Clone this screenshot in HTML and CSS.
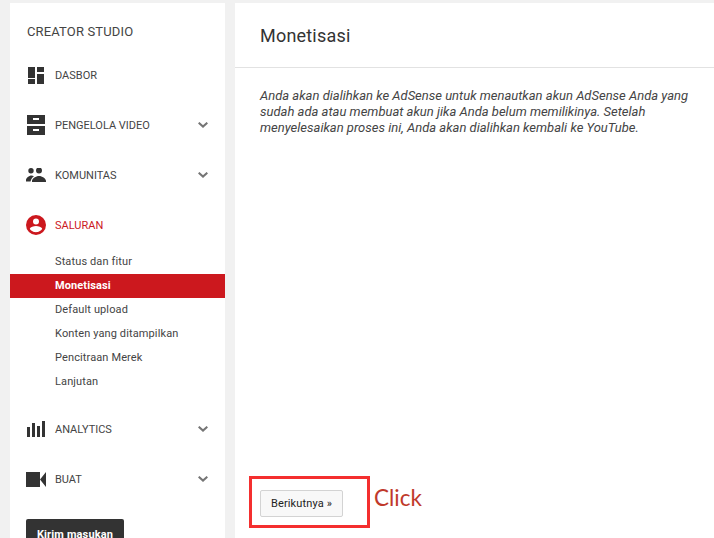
FILE: index.html
```html
<!DOCTYPE html>
<html lang="en">
<head>
  <meta charset="UTF-8">
  <meta name="viewport" content="width=device-width, initial-scale=1.0">
  <title>Monetisasi</title>
  <link rel="stylesheet" href="styles.css">
</head>
<body>
  <div class="page">
    <nav class="sidebar">
      <div class="studio-title">CREATOR STUDIO</div>

      <a class="nav-item">
        <span class="nav-icon">
          <svg width="16" height="17" viewBox="0 0 16 17"><path fill="#333" d="M0 0h7v11H0zM0 12h7v5H0zM9 0h7v5H9zM9 7h7v10H9z"/></svg>
        </span>
        <span class="nav-label">Dasbor</span>
      </a>

      <a class="nav-item">
        <span class="nav-icon">
          <svg width="18" height="20" viewBox="0 0 18 20"><path fill="#333" fill-rule="evenodd" d="M0 0h18v9H0zM6 3v2h6V3zM0 11h18v9H0zM6 14v2h6v-2z"/></svg>
        </span>
        <span class="nav-label">Pengelola video</span>
        <svg class="chevron" width="10" height="6" viewBox="0 0 10 6"><path fill="none" stroke="#757575" stroke-width="2" d="M.7.7 5 4.600 9.300.7"/></svg>
      </a>

      <a class="nav-item">
        <span class="nav-icon">
          <svg width="20" height="14" viewBox="0 0 20 14"><path fill="#333" d="M5 5.500a2.700 2.700 0 1 0 0-5.400 2.700 2.700 0 0 0 0 5.400zM13 5.500a3 3 0 1 0 0-6 3 3 0 0 0 0 6zM0 12c0-2 3-4.500 5.500-4.500 1 0 1.500.2 2.500.7-1.500 1-2.500 2.200-3 3.800l-.5 1.500H0zM6 14v-1c0-2.500 4-5 7-5s7 2.500 7 5v1z"/></svg>
        </span>
        <span class="nav-label">Komunitas</span>
        <svg class="chevron" width="10" height="6" viewBox="0 0 10 6"><path fill="none" stroke="#757575" stroke-width="2" d="M.7.7 5 4.600 9.300.7"/></svg>
      </a>

      <a class="nav-item active">
        <span class="nav-icon">
          <svg width="20" height="20" viewBox="0 0 20 20"><path fill="#cc181e" fill-rule="evenodd" d="M10 0a10 10 0 1 1 0 20 10 10 0 0 1 0-20zM10 3.500a3 3 0 1 0 0 6 3 3 0 0 0 0-6zM3.800 13.500c.5 2 3.500 3.700 6.200 3.700s5.700-1.700 6.200-3.700c-.8-1.500-3.700-2.500-6.200-2.500s-5.400 1-6.200 2.500z"/></svg>
        </span>
        <span class="nav-label">Saluran</span>
      </a>

      <ul class="sub-menu">
        <li>Status dan fitur</li>
        <li class="selected">Monetisasi</li>
        <li>Default upload</li>
        <li>Konten yang ditampilkan</li>
        <li>Pencitraan Merek</li>
        <li>Lanjutan</li>
      </ul>

      <a class="nav-item after-sub">
        <span class="nav-icon">
          <svg width="18" height="16" viewBox="0 0 18 16"><path fill="#333" d="M0 6h3v10H0zM5 2h3v14H5zM10 5h3v11h-3zM15 0h3v16h-3z"/></svg>
        </span>
        <span class="nav-label">Analytics</span>
        <svg class="chevron" width="10" height="6" viewBox="0 0 10 6"><path fill="none" stroke="#757575" stroke-width="2" d="M.7.7 5 4.600 9.300.7"/></svg>
      </a>

      <a class="nav-item">
        <span class="nav-icon">
          <svg width="20" height="15" viewBox="0 0 20 15"><path fill="#333" d="M0 0h14v15H0zM14 7.500 20 0v15z"/></svg>
        </span>
        <span class="nav-label">Buat</span>
        <svg class="chevron" width="10" height="6" viewBox="0 0 10 6"><path fill="none" stroke="#757575" stroke-width="2" d="M.7.7 5 4.600 9.300.7"/></svg>
      </a>

      <button class="feedback">Kirim masukan</button>
    </nav>

    <main class="content">
      <header class="content-header">
        <h1>Monetisasi</h1>
      </header>
      <p class="intro">Anda akan dialihkan ke AdSense untuk menautkan akun AdSense Anda yang sudah ada atau membuat akun jika Anda belum memilikinya. Setelah menyelesaikan proses ini, Anda akan dialihkan kembali ke YouTube.</p>
      <div class="actions">
        <button class="next-btn">Berikutnya »</button>
      </div>
    </main>
  </div>

  <div class="callout"></div>
  <div class="callout-text">Click</div>
</body>
</html>
```

FILE: styles.css
```css
* {
  box-sizing: border-box;
}
html, body {
  height: 100%;
}
body {
  margin: 0;
  background-color: #f1f1f1;
  font-family: Roboto, Arial, sans-serif;
  color: #333;
  overflow: hidden;
}
.page {
  display: flex;
  gap: 10px;
  height: 538px;
  padding: 3px 0 0 10px;
}
.sidebar {
  width: 215px;
  flex-shrink: 0;
  background-color: #fff;
  overflow: hidden;
}
.studio-title {
  padding: 21px 0 0 17px;
  height: 47px;
  font-size: 13px;
  line-height: 16px;
  letter-spacing: .15px;
  color: #444;
}
.nav-item {
  display: flex;
  align-items: center;
  height: 50px;
  padding-right: 17px;
  font-size: 11px;
  color: #444;
}
.nav-icon {
  display: flex;
  justify-content: center;
  width: 45px;
  padding-left: 7px;
}
.nav-label {
  flex: 1;
  text-transform: uppercase;
}
.active .nav-label {
  color: #cc181e;
}
.sub-menu {
  list-style: none;
  margin: 0;
  padding: 0;
}
.sub-menu li {
  height: 24px;
  padding-left: 45px;
  font-size: 11px;
  line-height: 24px;
  letter-spacing: .12px;
  color: #444;
}
.sub-menu .selected {
  background-color: #cc181e;
  color: #fff;
  font-weight: 700;
  letter-spacing: .1px;
}
.after-sub {
  margin-top: 10px;
}
.feedback {
  display: block;
  width: 98px;
  height: 30px;
  margin: 15px 0 0 16px;
  padding: 0;
  border: none;
  border-radius: 2px;
  background-color: #333;
  color: #fff;
  font-family: Roboto, Arial, sans-serif;
  font-size: 11px;
  font-weight: 700;
  letter-spacing: .15px;
}
.content {
  flex: 1;
  display: flex;
  flex-direction: column;
  background-color: #fff;
}
.content-header {
  height: 65px;
  padding: 0 25px;
  border-bottom: 1px solid #e2e2e2;
}
.content-header h1 {
  margin: 0;
  font-size: 18px;
  font-weight: 400;
  line-height: 65px;
  letter-spacing: .2px;
  color: #333;
}
.intro {
  margin: 20px 0 0;
  padding: 0 25px;
  font-size: 13px;
  font-style: italic;
  line-height: 16px;
  color: #444;
}
.actions {
  margin-top: auto;
  padding: 0 0 21px 25px;
}
.next-btn {
  display: block;
  width: 83px;
  height: 27px;
  padding: 0;
  border: 1px solid #d3d3d3;
  border-radius: 2px;
  background-color: #f8f8f8;
  color: #222;
  font-family: Roboto, Arial, sans-serif;
  font-size: 11px;
  letter-spacing: .15px;
}
/* annotation drawn on top of the screenshot */
.callout {
  position: absolute;
  left: 249px;
  top: 476px;
  width: 121px;
  height: 52px;
  border: 3px solid #f42f2f;
}
.callout-text {
  position: absolute;
  left: 374px;
  top: 483px;
  font-family: Lato, Arial, sans-serif;
  font-size: 22.5px;
  line-height: 30px;
  color: #c0392b;
}
```
